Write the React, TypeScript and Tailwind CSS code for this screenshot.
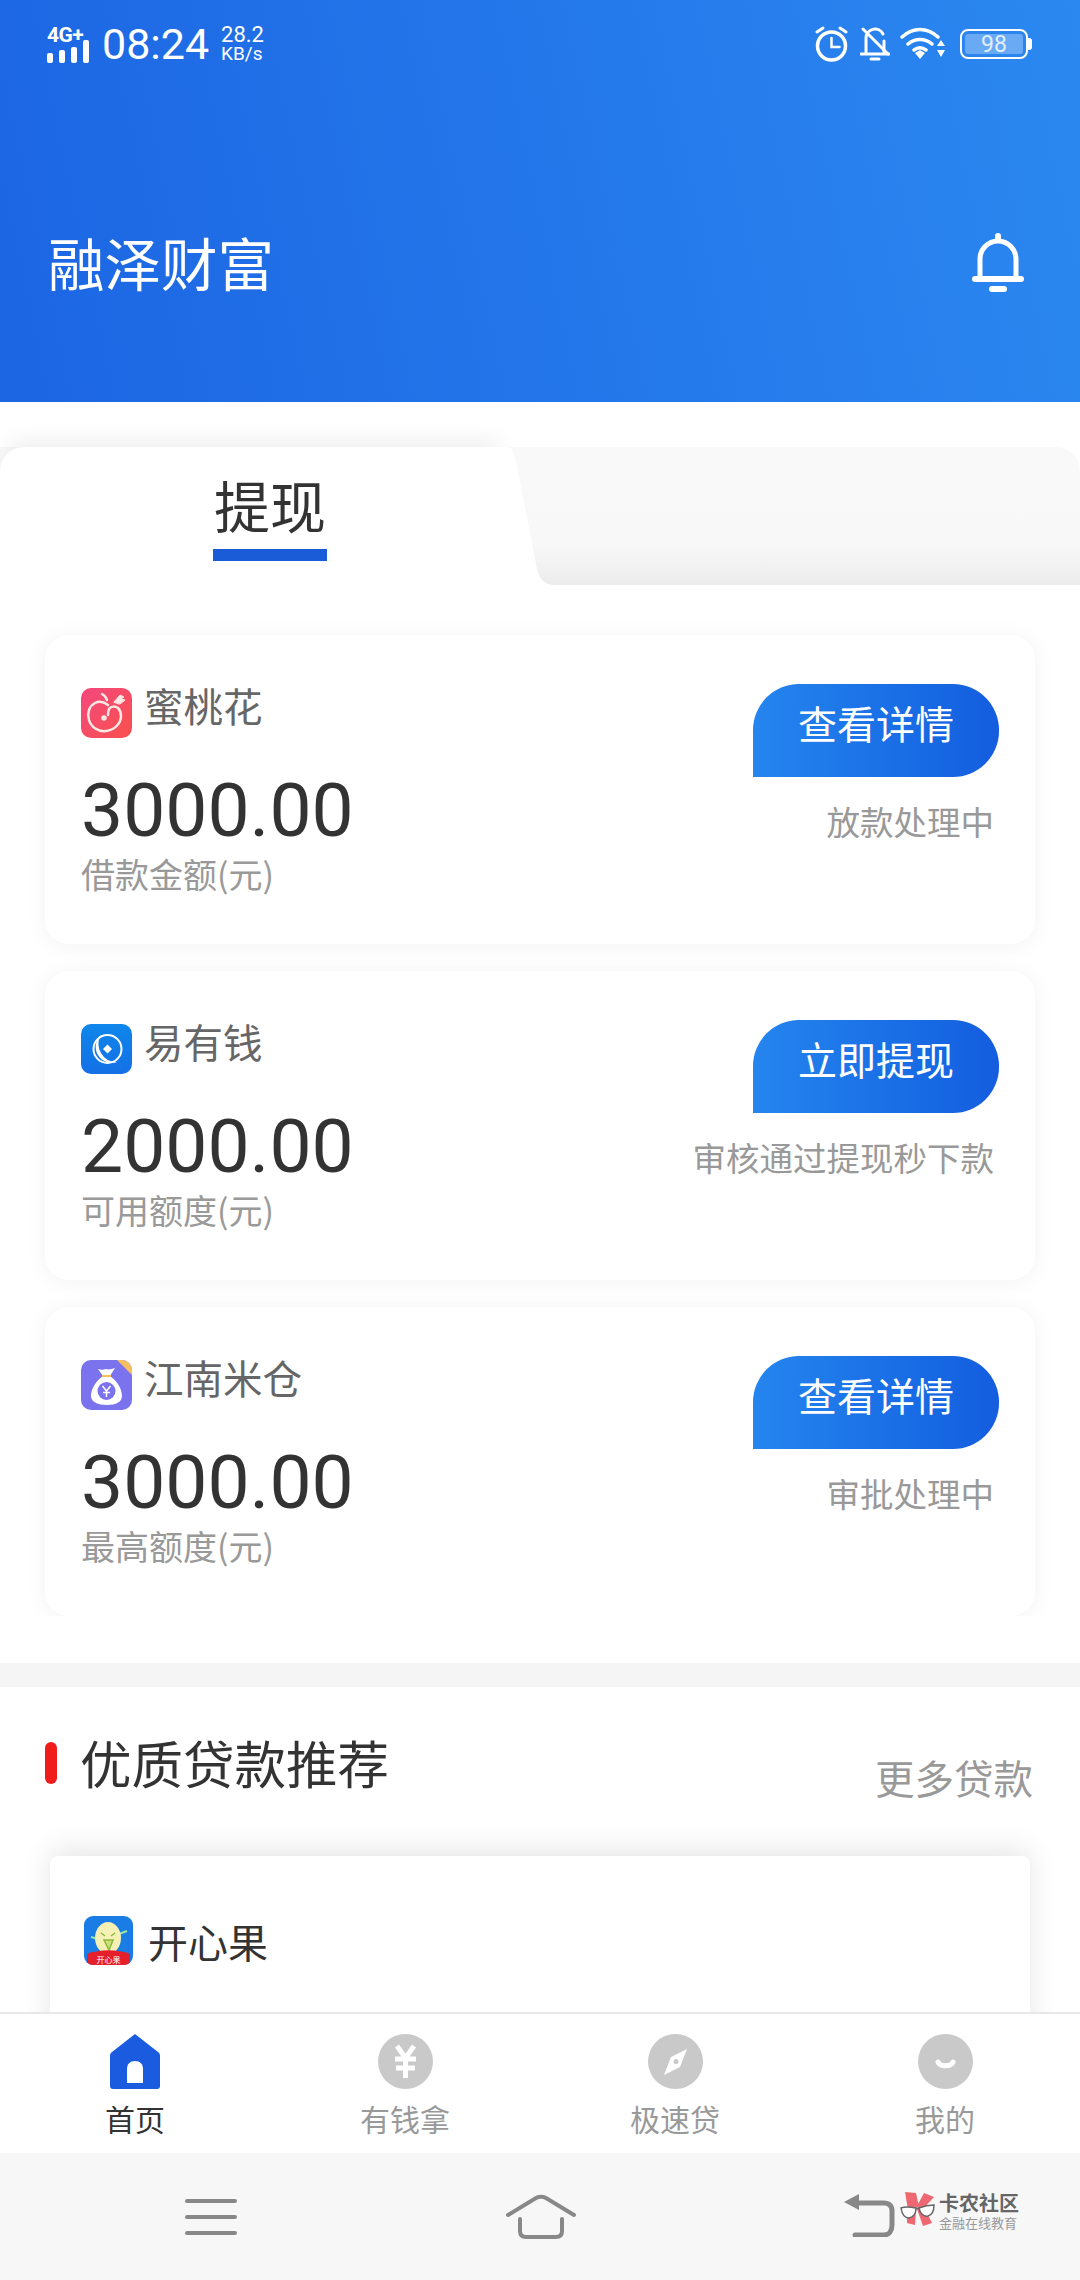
import type { ReactNode } from "react";

const cjk = "[font-family:'Noto_Sans_CJK_SC',sans-serif]";

function SignalIcon() {
    return (
        <div className="flex w-[42px] shrink-0 flex-col">
            <span className="h-[20px] whitespace-nowrap text-[21px] font-bold leading-[20px] tracking-[-0.5px] [font-family:Roboto,sans-serif]">
                4G+
            </span>
            <svg width="42" height="24" viewBox="0 0 42 24" className="mt-[-6px]">
                <rect x="0" y="14" width="6" height="10" rx="2" fill="#fff" />
                <rect x="12" y="11" width="6" height="13" rx="2" fill="#fff" />
                <rect x="24" y="8" width="6" height="16" rx="2" fill="#fff" />
                <rect x="36" y="1" width="6" height="23" rx="2" fill="#fff" />
            </svg>
        </div>
    );
}

function StatusIcons() {
    return (
        <div className="flex items-center">
            <svg width="33" height="36" viewBox="0 0 33 36" fill="none" stroke="#fff" strokeLinecap="round">
                <circle cx="16.500" cy="20" r="14" strokeWidth="3.500" />
                <path d="M16.500 12v9h8" strokeWidth="2.500" />
                <path d="M2 6l6-4M31 6l-6-4" strokeWidth="3" />
            </svg>
            <svg width="30" height="36" viewBox="0 0 30 36" fill="none" stroke="#fff" strokeLinecap="round" className="ml-[12px]">
                <path d="M6 26V12a9 9 0 0 1 17-4M24 15v11" strokeWidth="3" />
                <path d="M1 28h28" strokeWidth="3" />
                <path d="M11 33h8" strokeWidth="3" />
                <path d="M3 3l25 25" strokeWidth="3" />
            </svg>
            <svg width="47" height="34" viewBox="0 0 47 34" fill="none" className="ml-[10px]">
                <path d="M2 10c11-10 25-10 36 0M8 17c7-6 17-6 24 0M14 23c4-3 8-3 12 0" stroke="#fff" strokeWidth="3.500" strokeLinecap="round" />
                <path d="M15 26l5-3 5 3-5 6zM37 19l4-6 4 6zM37 23h8l-4 7z" fill="#fff" />
            </svg>
            <div className="ml-[13px] flex items-center">
                <div className="flex h-[30px] w-[68px] rounded-[8px] border-2 border-white p-[3px]">
                    <div className="flex flex-1 items-center justify-center rounded-[3px] bg-white/30 text-[23px] leading-none text-white/80 [font-family:Roboto,sans-serif]">
                        98
                    </div>
                </div>
                <div className="h-[12px] w-[4px] rounded-r-[3px] bg-white" />
            </div>
        </div>
    );
}

function PeachLogo() {
    return (
        <div className="h-[50px] w-[51px] shrink-0 rounded-[10px] bg-gradient-to-br from-[#f4487c] to-[#f8504c]">
            <svg width="51" height="50" viewBox="0 0 51 50" fill="none" stroke="#ffe9e4" strokeWidth="2.500" strokeLinecap="round">
                <path d="M27 17c-4-3-9-4-13-2C8 18 6 25 8 32c2 7 9 12 17 11 9-1 15-8 15-15 0-3-1-6-3-8-3-2-7-2-9 1-1 2-1 4-1 6" />
                <circle cx="23" cy="30" r="1.500" />
                <path d="M26 12c-1-3-3-5-5-6" />
                <path d="M33 14l6-7 4 2-3 2 4 1-5 4z" fill="#ffe9e4" strokeWidth="1" />
            </svg>
        </div>
    );
}

function CoinLogo() {
    return (
        <div className="h-[50px] w-[51px] shrink-0 rounded-[10px] bg-gradient-to-b from-[#0f86ea] to-[#1470e6]">
            <svg width="51" height="50" viewBox="0 0 51 50" fill="none">
                <path d="M20 11A16 16 0 0 0 36 38 A18 18 0 0 1 20 11z" fill="#fff" />
                <circle cx="26.500" cy="25" r="14" stroke="#fff" strokeWidth="2" />
                <path d="M26.500 20.500l4.500 4.500-4.500 4.500-4.500-4.500z" fill="#fff" />
            </svg>
        </div>
    );
}

function BagLogo() {
    return (
        <div className="relative h-[50px] w-[51px] shrink-0 overflow-hidden rounded-[10px] bg-[#7b72ee]">
            <svg width="51" height="50" viewBox="0 0 51 50">
                <path d="M36 0h15v15z" fill="#f7bf5e" />
                <path d="M17 9c3 1 5 1 8 0 3 1 6 0 9-1l-5 8c6 4 12 12 12 20 0 6-6 9-15 9s-16-3-16-9c0-8 6-16 12-20z" fill="#fff" />
                <path d="M21 16h9" stroke="#f7bf5e" strokeWidth="2" />
                <circle cx="25.500" cy="31" r="9" fill="#7b72ee" />
                <path d="M21.500 26l4 5 4-5M25.500 31v6M22 32.500h7" stroke="#fff" strokeWidth="1.500" fill="none" />
            </svg>
        </div>
    );
}

function NutLogo() {
    return (
        <div className="relative h-[49px] w-[49px] shrink-0 overflow-hidden rounded-[9px] bg-[#1a7de6]">
            <svg width="49" height="49" viewBox="0 0 49 49">
                <path d="M7 21l7 2M35 18l8-3" stroke="#9fe3a0" strokeWidth="2" />
                <ellipse cx="24" cy="22" rx="13" ry="16" fill="#f5f0b4" />
                <path d="M17 17l4 3M31 17l-4 3M20 24h9l-4 10z" stroke="#8ab93a" strokeWidth="1.500" fill="#cfe07a" />
                <path d="M3 38c13-5 30-5 43 0v11H3z" fill="#e51f2c" />
                <text x="24.500" y="47" textAnchor="middle" fill="#fff" fontSize="8" fontFamily="Noto Sans CJK SC, sans-serif">
                    开心果
                </text>
            </svg>
        </div>
    );
}

type Loan = {
    logo: ReactNode;
    name: string;
    amount: string;
    label: string;
    action: string;
    status: string;
};

const loans: Loan[] = [
    { logo: <PeachLogo />, name: "蜜桃花", amount: "3000.00", label: "借款金额(元)", action: "查看详情", status: "放款处理中" },
    { logo: <CoinLogo />, name: "易有钱", amount: "2000.00", label: "可用额度(元)", action: "立即提现", status: "审核通过提现秒下款" },
    { logo: <BagLogo />, name: "江南米仓", amount: "3000.00", label: "最高额度(元)", action: "查看详情", status: "审批处理中" },
];

function LoanCard({ loan }: { loan: Loan }) {
    return (
        <div className="flex h-[309px] justify-between rounded-[24px] bg-white pl-[36px] pr-[36px] pt-[49px] shadow-[0_2px_22px_rgba(0,0,0,0.05)]">
            <div className="pt-[3px]">
                <div className="flex h-[51px] items-center gap-[12px]">
                    {loan.logo}
                    <span className="pb-[15px] text-[39.500px] leading-none text-[#666]">{loan.name}</span>
                </div>
                <div className="mt-[32px] h-[80px] text-[75px] leading-[80px] text-[#333] [font-family:Roboto,sans-serif]">
                    {loan.amount}
                </div>
                <div className="mt-[4px] h-[40px] text-[34px] leading-[40px] text-[#999]">{loan.label}</div>
            </div>
            <div className="flex flex-col items-end">
                <div className="flex h-[93px] w-[246px] items-center justify-center rounded-t-[46px] rounded-br-[46px] bg-gradient-to-r from-[#2585ee] to-[#145ddf] pb-[16px] text-[39px] leading-none text-white">
                    {loan.action}
                </div>
                <div className="mt-[24px] h-[40px] pr-[5px] text-[33.500px] leading-[40px] text-[#999]">{loan.status}</div>
            </div>
        </div>
    );
}

function NavCircle({ children }: { children: ReactNode }) {
    return (
        <svg width="55" height="55" viewBox="0 0 55 55" fill="none">
            <circle cx="27.500" cy="27.500" r="27.500" fill="#c9c9c9" />
            {children}
        </svg>
    );
}

const navItems: { label: string; active?: boolean; icon: ReactNode }[] = [
    {
        label: "首页",
        active: true,
        icon: (
            <svg width="50" height="55" viewBox="0 0 50 55">
                <path d="M25 0L48 18c1.500 1 2 2 2 4v30c0 2-1 3-3 3H3c-2 0-3-1-3-3V22c0-2 .5-3 2-4z" fill="#1a5be0" />
                <path d="M17 49V35c0-5 3-8 8-8s8 3 8 8v14z" fill="#fff" />
            </svg>
        ),
    },
    {
        label: "有钱拿",
        icon: (
            <NavCircle>
                <path d="M19 12l8.500 12L36 12M17 25h21M18 34h19M27.500 24v20" stroke="#fff" strokeWidth="5" />
            </NavCircle>
        ),
    },
    {
        label: "极速贷",
        icon: (
            <NavCircle>
                <path d="M39 15L32 33 16 41l7-18z" fill="#fff" />
                <circle cx="28" cy="27.500" r="2.500" fill="#c9c9c9" />
            </NavCircle>
        ),
    },
    {
        label: "我的",
        icon: (
            <NavCircle>
                <path d="M20 28c2 5 13 5 15 0" stroke="#fff" strokeWidth="5" strokeLinecap="round" />
            </NavCircle>
        ),
    },
];

function SystemBar() {
    return (
        <div className="flex h-[127px] shrink-0 bg-[#f7f7f7]">
            <div className="w-[360px] pl-[185px] pt-[45px]">
                <svg width="52" height="38" viewBox="0 0 52 38" stroke="#888" strokeWidth="4" strokeLinecap="round">
                    <path d="M2 3h48M2 19h48M2 35h48" />
                </svg>
            </div>
            <div className="flex w-[360px] justify-center pl-[2px] pt-[41px]">
                <svg width="72" height="46" viewBox="0 0 72 46" fill="none" stroke="#888" strokeWidth="4" strokeLinecap="round">
                    <path d="M3 21L31 4c3-1.500 7-1.500 10 0l28 17" />
                    <path d="M15 25v12c0 4 2 6 6 6h30c4 0 6-2 6-6V25" />
                </svg>
            </div>
            <div className="flex flex-1 pl-[123px] pt-[40px]">
                <svg width="52" height="44" viewBox="0 0 52 44" fill="none" className="shrink-0">
                    <path d="M16 10h25c5 0 8 3 8 8v14c0 6-3 10-8 10H12" stroke="#888" strokeWidth="5" strokeLinecap="round" />
                    <path d="M1 9L16 1v16z" fill="#888" />
                </svg>
                <svg width="36" height="36" viewBox="0 0 36 36" className="ml-[5px] mt-[-2px] shrink-0">
                    <path d="M5 1l11 1 3 14-11 3zM24 2l10 4-12 13-5-4zM7 20l9-1-1 15-8-2zM17 18l7-2 8 16-9 3z" fill="#ef6871" />
                    <path d="M1 17c5-2 10-1 15 0 0 6-2 9-7 10-4 0-7-4-8-10zM19 17c5-2 10-3 15-3 0 6-2 10-6 11-5 1-8-3-9-8z" fill="#fff" stroke="#666" strokeWidth="1.500" />
                    <path d="M16 18l3-1" stroke="#666" strokeWidth="1.500" />
                </svg>
                <div className="ml-[3px] flex w-[84px] flex-col">
                    <span className={`${cjk} whitespace-nowrap text-[20px] font-bold leading-[20px] text-[#666]`}>卡农社区</span>
                    <span className={`${cjk} mt-[2px] whitespace-nowrap text-[13px] leading-[16px] text-[#999]`}>金融在线教育</span>
                </div>
            </div>
        </div>
    );
}

export default function App() {
    return (
        <div className={`${cjk} flex h-[2280px] w-[1080px] flex-col overflow-hidden bg-white`}>
            <div className="flex-1 overflow-hidden">
                <header className="h-[402px] bg-[linear-gradient(78deg,#1c65e3,#2b88f0)] text-white">
                    <div className="flex h-[86px] items-center justify-between pl-[47px] pr-[48px] pt-[2px]">
                        <div className="flex items-center">
                            <SignalIcon />
                            <span className="ml-[13px] text-[43px] leading-none [font-family:Roboto,sans-serif]">08:24</span>
                            <div className="ml-[12px] flex flex-col text-[22px] leading-[19px] [font-family:Roboto,sans-serif]">
                                <span>28.2</span>
                                <span className="text-[19px]">KB/s</span>
                            </div>
                        </div>
                        <StatusIcons />
                    </div>
                    <div className="mt-[135px] flex h-[80px] items-center justify-between pl-[48px] pr-[56px]">
                        <h1 className="text-[56.500px] font-normal leading-none">融泽财富</h1>
                        <svg width="52" height="60" viewBox="0 0 52 60" fill="none" stroke="#fff" strokeLinecap="round" className="mt-[4px]">
                            <path d="M26 3v3" strokeWidth="6" />
                            <path d="M8 45V26a18 18 0 0 1 36 0v19" strokeWidth="5" />
                            <path d="M3 46h46" strokeWidth="6" />
                            <path d="M20 56h12" strokeWidth="6" />
                        </svg>
                    </div>
                </header>

                <div className="h-[45px]" />

                <div className="flex h-[138px] rounded-tr-[24px] bg-[linear-gradient(180deg,#f9f9f9_0%,#f8f8f8_70%,#ececec_100%)]">
                    <div className="w-[505px] rounded-tl-[24px] bg-white pl-[213px] pt-[27px] shadow-[0_-12px_22px_-6px_rgba(0,0,0,0.07)]">
                        <div className="h-[60px] w-[114px] text-center text-[56px] leading-[60px] text-[#333]">提现</div>
                        <div className="mt-[15px] h-[12px] w-[114px] bg-[#1a5bd8]" />
                    </div>
                    <svg width="50" height="138" viewBox="0 0 50 138" className="shrink-0">
                        <path d="M0 0h2c5 0 8 6 9 14l21 108c2 10 8 16 18 16H0z" fill="#fff" />
                    </svg>
                </div>

                <section className="mb-[47px] flex flex-col gap-[27px] overflow-hidden px-[45px] pt-[50px]">
                    {loans.map((loan) => (
                        <LoanCard key={loan.name} loan={loan} />
                    ))}
                </section>

                <div className="h-[24px] bg-[#f5f5f5]" />

                <section className="pt-[45px]">
                    <div className="flex items-start justify-between pl-[45px] pr-[47px]">
                        <div className="flex h-[60px] items-center gap-[23px]">
                            <div className="mt-[2px] h-[42px] w-[12px] rounded-full bg-[#f01c1c]" />
                            <h2 className="text-[51.500px] font-normal leading-none text-[#333]">优质贷款推荐</h2>
                        </div>
                        <div className="mt-[15px] h-[60px] text-[39.500px] leading-[60px] text-[#999]">更多贷款</div>
                    </div>
                    <div className="mx-[50px] mt-[49px] h-[300px] rounded-[8px] bg-white pl-[34px] pt-[60px] shadow-[0_-6px_28px_rgba(0,0,0,0.1)]">
                        <div className="flex items-center gap-[15px]">
                            <NutLogo />
                            <span className="text-[40px] leading-none text-[#333]">开心果</span>
                        </div>
                    </div>
                </section>
            </div>

            <nav className="grid h-[141px] shrink-0 grid-cols-4 border-t-2 border-[#e8e8e8] bg-white pt-[20px]">
                {navItems.map((item) => (
                    <div key={item.label} className="flex flex-col items-center">
                        {item.icon}
                        <span className={`mt-[11px] text-[30px] leading-[36px] ${item.active ? "text-[#333]" : "text-[#999]"}`}>
                            {item.label}
                        </span>
                    </div>
                ))}
            </nav>

            <SystemBar />
        </div>
    );
}
